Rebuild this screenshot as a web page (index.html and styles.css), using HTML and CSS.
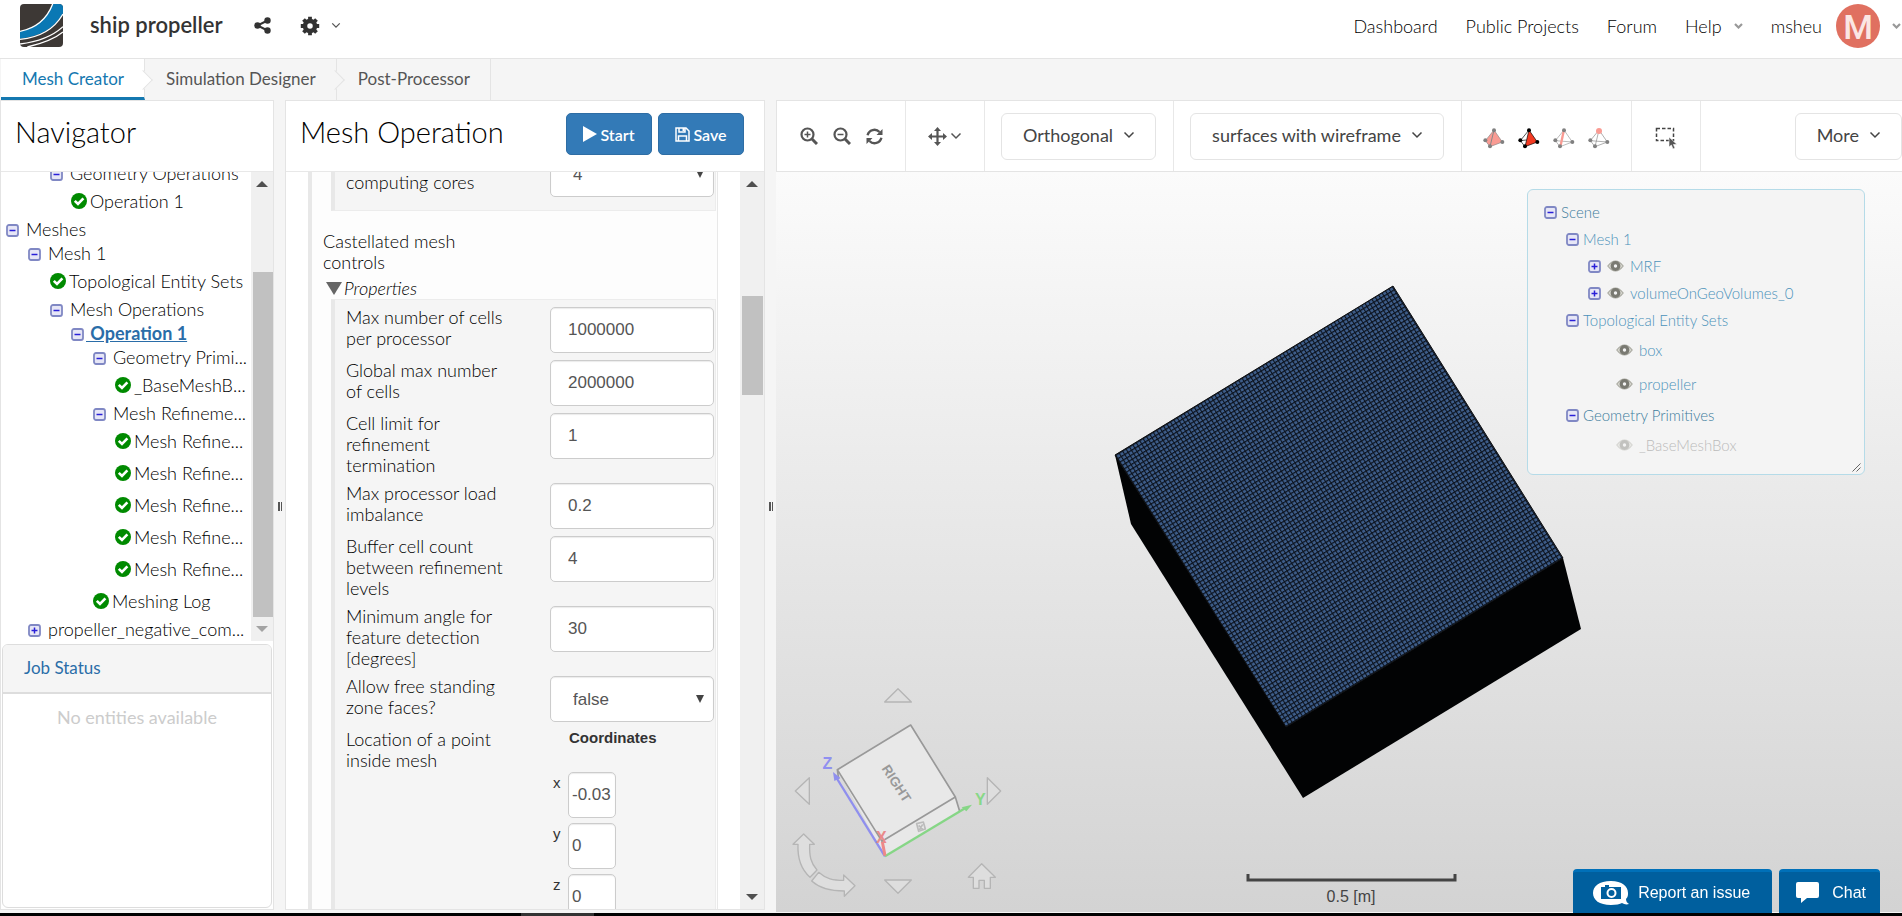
FILE: index.html
```html
<!DOCTYPE html>
<html lang="en">
<head>
  <meta charset="UTF-8" />
  <title>ship propeller</title>
  <link rel="stylesheet" href="styles.css">
</head>
<body>
  <!-- shared icons -->
  <svg class="defs" width="0" height="0" aria-hidden="true">
    <symbol id="ok" viewBox="0 0 16 16">
      <circle cx="8" cy="8" r="8" fill="#008a00" />
      <path d="M3.8 7.8l3.2 3.2 5.4-5.6" fill="none" stroke="#fff" stroke-width="2.6" />
    </symbol>
    <symbol id="minus" viewBox="0 0 13 13">
      <rect x="1" y="1" width="11" height="11" rx="2" fill="#e6e6f6" stroke="#8088c4" stroke-width="1.800" />
      <path d="M3.5 6.5h6" stroke="#2a20d8" stroke-width="1.5" />
    </symbol>
    <symbol id="plus" viewBox="0 0 13 13">
      <rect x="1" y="1" width="11" height="11" rx="2" fill="#e6e6f6" stroke="#8088c4" stroke-width="1.800" />
      <path d="M3.5 6.5h6M6.5 3.5v6" stroke="#2a20d8" stroke-width="1.5" />
    </symbol>
    <symbol id="eye" viewBox="0 0 17 12">
      <path d="M.8 6Q8.500-4 16.200 6Q8.500 16 .8 6z" fill="#d8d8d0" stroke="#a9a9a0" stroke-width="1.200" />
      <circle cx="8.500" cy="6" r="3.300" fill="#f4f4f4" stroke="#7a7a72" stroke-width="3.200" />
    </symbol>
    <symbol id="chevron" viewBox="0 0 12 8">
      <path d="M1.500 1.500l4.500 4.500 4.500-4.500" fill="none" stroke="currentColor" stroke-width="1.500" />
    </symbol>
    <symbol id="caret" viewBox="0 0 9 6">
      <path d="M1 1l3.500 3.500L8 1" fill="none" stroke="currentColor" stroke-width="2.200" />
    </symbol>
  </svg>

  <header class="topbar">
    <a href="#" class="logo" aria-label="Home">
      <svg width="43" height="43" viewBox="0 0 129 129">
        <clipPath id="logo-clip"><rect width="129" height="129" rx="12" /></clipPath>
        <g clip-path="url(#logo-clip)">
          <rect width="129" height="129" fill="#3d3835" />
          <path d="M0 82C50 72 82 42 98 0H129V28C104 72 62 98 0 104z" fill="#0a78b4" />
          <path d="M0 82C50 72 82 42 98 0M0 106C62 100 104 74 129 30M0 120C50 114 96 98 129 68M22 129C60 120 100 108 129 84" fill="none" stroke="#fff" stroke-width="4" />
        </g>
      </svg>
    </a>
    <h1>ship propeller</h1>
    <button class="icon-btn share" aria-label="Share">
      <svg width="17" height="17" viewBox="0 0 17 17" fill="#333">
        <circle cx="13.500" cy="3.500" r="3.200" /><circle cx="3.500" cy="8.500" r="3.200" /><circle cx="13.500" cy="13.500" r="3.200" />
        <path d="M13.500 3.500l-10 5 10 5" fill="none" stroke="#333" stroke-width="2" />
      </svg>
    </button>
    <button class="icon-btn gear" aria-label="Settings">
      <svg width="20" height="20" viewBox="0 0 20 20">
        <circle cx="10" cy="10" r="5" fill="none" stroke="#333" stroke-width="4.500" />
        <g stroke="#333" stroke-width="3.800"><path d="M10 .8v3M10 16.200v3M.8 10h3M16.200 10h3M3.500 3.500l2.100 2.100M14.400 14.400l2.100 2.100M3.500 16.500l2.100-2.100M14.400 5.600l2.100-2.100" /></g>
      </svg>
      <svg class="chev" width="10" height="7"><use href="#chevron" /></svg>
    </button>
    <nav class="topnav">
      <a href="#">Dashboard</a>
      <a href="#">Public Projects</a>
      <a href="#">Forum</a>
      <a href="#">Help <svg class="caret" width="9" height="6"><use href="#caret" /></svg></a>
      <a href="#" class="user">msheu <span class="avatar">M</span> <svg class="caret" width="9" height="6"><use href="#caret" /></svg></a>
    </nav>
  </header>

  <nav class="steps">
    <a href="#" class="active">Mesh Creator</a>
    <a href="#">Simulation Designer</a>
    <a href="#">Post-Processor</a>
  </nav>

  <main>
    <section class="panel navigator">
      <div class="panel-head"><h2>Navigator</h2></div>
      <div class="scroll-area">
        <ul class="tree">
          <li class="l2"><svg class="tg"><use href="#minus" /></svg>Geometry Operations</li>
          <li class="l3 leaf"><svg class="ok"><use href="#ok" /></svg>Operation 1</li>
          <li><svg class="tg"><use href="#minus" /></svg>Meshes</li>
          <li class="l1"><svg class="tg"><use href="#minus" /></svg>Mesh 1</li>
          <li class="l2 leaf"><svg class="ok"><use href="#ok" /></svg>Topological Entity Sets</li>
          <li class="l2"><svg class="tg"><use href="#minus" /></svg>Mesh Operations</li>
          <li class="l3"><svg class="tg"><use href="#minus" /></svg><a href="#">&nbsp;Operation 1</a></li>
          <li class="l4"><svg class="tg"><use href="#minus" /></svg>Geometry Primi...</li>
          <li class="l5 leaf"><svg class="ok"><use href="#ok" /></svg>_BaseMeshB...</li>
          <li class="l4"><svg class="tg"><use href="#minus" /></svg>Mesh Refineme...</li>
          <li class="l5 leaf"><svg class="ok"><use href="#ok" /></svg>Mesh Refine...</li>
          <li class="l5 leaf"><svg class="ok"><use href="#ok" /></svg>Mesh Refine...</li>
          <li class="l5 leaf"><svg class="ok"><use href="#ok" /></svg>Mesh Refine...</li>
          <li class="l5 leaf"><svg class="ok"><use href="#ok" /></svg>Mesh Refine...</li>
          <li class="l5 leaf"><svg class="ok"><use href="#ok" /></svg>Mesh Refine...</li>
          <li class="l4 leaf"><svg class="ok"><use href="#ok" /></svg>Meshing Log</li>
          <li class="l1"><svg class="tg"><use href="#plus" /></svg>propeller_negative_com...</li>
        </ul>
        <div class="scrollbar">
          <i class="up"></i><b class="thumb"></b><i class="down off"></i>
        </div>
      </div>
      <div class="jobs">
        <h3><a href="#">Job Status</a></h3>
        <p>No entities available</p>
      </div>
    </section>

    <div class="splitter"><i></i></div>

    <section class="panel operation">
      <div class="panel-head">
        <h2>Mesh Operation</h2>
        <button class="btn"><svg width="14" height="16" viewBox="0 0 14 16"><path d="M0 0l14 8-14 8z" fill="#fff" /></svg>Start</button>
        <button class="btn"><svg width="15" height="15" viewBox="0 0 15 15" fill="none" stroke="#fff" stroke-width="1.500"><path d="M1 1h10l3 3v10H1z" /><path d="M4 1v4h6V1M3.500 14V9h8v5" /><path d="M8.500 1v3" stroke-width="2" /></svg>Save</button>
      </div>
      <div class="scroll-area">
        <div class="form-wrap">
          <div class="outer">
            <div class="group first">
              <div class="row">
                <label for="cores">Number of computing cores</label>
                <span class="select"><select id="cores"><option>4</option></select></span>
              </div>
            </div>
            <p class="group-title">Castellated mesh controls</p>
            <p class="props"><i></i>Properties</p>
            <div class="group">
              <div class="row"><label for="f1">Max number of cells per processor</label><input id="f1" value="1000000"></div>
              <div class="row"><label for="f2">Global max number of cells</label><input id="f2" value="2000000"></div>
              <div class="row"><label for="f3">Cell limit for refinement termination</label><input id="f3" value="1"></div>
              <div class="row"><label for="f4">Max processor load imbalance</label><input id="f4" value="0.2"></div>
              <div class="row"><label for="f5">Buffer cell count between refinement levels</label><input id="f5" value="4"></div>
              <div class="row"><label for="f6">Minimum angle for feature detection [degrees]</label><input id="f6" value="30"></div>
              <div class="row"><label for="f7">Allow free standing zone faces?</label><span class="select"><select id="f7"><option>false</option></select></span></div>
              <div class="row">
                <span class="label">Location of a point inside mesh</span>
                <div class="coords">
                  <strong>Coordinates</strong>
                  <div><label for="cx">x</label><input id="cx" value="-0.03"></div>
                  <div><label for="cy">y</label><input id="cy" value="0"></div>
                  <div><label for="cz">z</label><input id="cz" value="0"></div>
                </div>
              </div>
            </div>
          </div>
        </div>
        <div class="scrollbar">
          <i class="up"></i><b class="thumb"></b><i class="down"></i>
        </div>
      </div>
    </section>

    <div class="splitter"><i></i></div>

    <section class="viewer">
      <div class="toolbar">
        <div class="tools zoom">
          <button class="icon-btn" aria-label="Zoom in"><svg width="18" height="18" viewBox="0 0 18 18" fill="none" stroke="#555"><circle cx="7.500" cy="7.500" r="6" stroke-width="2.200" /><path d="M12 12l5 5" stroke-width="3" /><path d="M4.500 7.500h6M7.500 4.500v6" stroke-width="1.500" /></svg></button>
          <button class="icon-btn" aria-label="Zoom out"><svg width="18" height="18" viewBox="0 0 18 18" fill="none" stroke="#555"><circle cx="7.500" cy="7.500" r="6" stroke-width="2.200" /><path d="M12 12l5 5" stroke-width="3" /><path d="M4.500 7.500h6" stroke-width="1.500" /></svg></button>
          <button class="icon-btn" aria-label="Refresh"><svg width="17" height="17" viewBox="0 0 17 17" fill="none" stroke="#555" stroke-width="2.400"><path d="M1.600 7.200A7 7 0 0 1 13.500 4M15.400 9.800A7 7 0 0 1 3.500 13" /><path d="M16.500 1v6h-6zM.5 16v-6h6z" fill="#555" stroke="none" /></svg></button>
        </div>
        <div class="tools move">
          <button class="icon-btn" aria-label="Move"><svg width="19" height="19" viewBox="0 0 19 19"><path d="M9.500 2v15M2 9.500h15" stroke="#555" stroke-width="2.200" /><path d="M9.500 0l3.500 4h-7zM9.500 19l3.500-4h-7zM0 9.500l4-3.500v7zM19 9.500l-4-3.500v7z" fill="#555" /></svg><svg class="chev" width="12" height="8"><use href="#chevron" /></svg></button>
        </div>
        <div class="tools"><button class="drop">Orthogonal <svg width="12" height="8"><use href="#chevron" /></svg></button></div>
        <div class="tools"><button class="drop">surfaces with wireframe <svg width="12" height="8"><use href="#chevron" /></svg></button></div>
        <div class="tools tetra">
          <button class="icon-btn" aria-label="Volumes"><svg width="22" height="21" viewBox="0 0 66 63"><path d="M33 6L7 38 21 56 58 42z" fill="#fa9b93" stroke="#888" stroke-width="2" /><path d="M33 6L21 56" stroke="#888" stroke-width="3" /><g fill="#808080"><circle cx="33" cy="7" r="6" /><circle cx="7" cy="37" r="6" /><circle cx="21" cy="55" r="6" /><circle cx="58" cy="42" r="6" /></g></svg></button>
          <button class="icon-btn" aria-label="Faces"><svg width="22" height="21" viewBox="0 0 66 63"><path d="M33 6L7 38 21 56" fill="none" stroke="#000" stroke-width="2" /><path d="M33 6L21 56 58 42z" fill="#f33a22" stroke="#000" stroke-width="2" /><path d="M7 38l18-2" stroke="#000" stroke-width="2" /><g><circle cx="33" cy="7" r="6" /><circle cx="7" cy="37" r="6" /><circle cx="21" cy="55" r="6" /><circle cx="58" cy="42" r="6" /></g></svg></button>
          <button class="icon-btn" aria-label="Edges"><svg width="22" height="21" viewBox="0 0 66 63"><path d="M33 6L7 38 21 56 58 42zM7 38l51 4" fill="none" stroke="#999" stroke-width="2" /><path d="M32 10L23 52" stroke="#fa9b93" stroke-width="7" /><g fill="#808080"><circle cx="33" cy="7" r="6" /><circle cx="7" cy="37" r="6" /><circle cx="21" cy="55" r="6" /><circle cx="58" cy="42" r="6" /></g></svg></button>
          <button class="icon-btn" aria-label="Vertices"><svg width="22" height="21" viewBox="0 0 66 63"><path d="M33 6L7 38 21 56 58 42zM7 38l51 4M33 6L21 56" fill="none" stroke="#888" stroke-width="2" /><circle cx="33" cy="9" r="9" fill="#fa9b93" /><g fill="#808080"><circle cx="7" cy="37" r="6" /><circle cx="21" cy="55" r="6" /><circle cx="58" cy="42" r="6" /></g></svg></button>
        </div>
        <div class="tools pick">
          <button class="icon-btn" aria-label="Box select"><svg width="22" height="22" viewBox="0 0 22 22"><path d="M1.500 1.500h17v12h-17z" fill="none" stroke="#444" stroke-width="1.500" stroke-dasharray="3.500 2" /><path d="M14 10v10l2.400-2 1.600 4 2-1-1.600-3.500H22z" fill="#555" stroke="#fff" stroke-width=".6" /></svg></button>
        </div>
        <button class="drop more">More <svg width="12" height="8"><use href="#chevron" /></svg></button>
      </div>

      <div class="canvas">
        <svg class="model" viewBox="776 172 1126 740">
          <defs>
            <pattern id="mesh" width="4" height="4" patternUnits="userSpaceOnUse" patternTransform="matrix(.853 -.521 .53 .848 1115 455)">
              <rect width="4" height="4" fill="#46699a" />
              <path d="M0 0h4M0 0v4" stroke="#070b12" stroke-width="2.200" />
            </pattern>
          </defs>
          <path d="M1115 455l16 69 172 274 278-169-18-71z" fill="#020304" />
          <path d="M1393 286L1115 455l171 272 277-169z" fill="#1f314d" />
          <path d="M1393 286L1115 455l171 272 277-169z" fill="url(#mesh)" fill-opacity=".8" stroke="#111" />
          <path d="M1248 874v6h207v-6" fill="none" stroke="#444" stroke-width="3" />
          <text x="1351" y="902" text-anchor="middle" class="scale">0.5 [m]</text>
        </svg>

        <svg class="navcube" viewBox="0 0 780 768" stroke-linejoin="round">
          <g fill="#dedede" stroke="#b5b5b5" stroke-width="4">
            <path d="M384 86l40 40h-80zM384 700l40-40h-80zM76 393l42-40v80zM692 393l-40-40v80z" />
            <path d="M635 611l41 41h-15v33h-18v-24h-16v24h-17v-33h-15z" />
            <path d="M101 522l32 31h-14c-1 36 3 56 22 77l-21 22c-27-24-38-54-36-99H69z" />
            <path d="M146 637c22 20 44 24 75 24v-16l34 32-32 32v-16c-44 0-74-8-98-30z" />
          </g>
          <path d="M422 195L202 329l143 260 224-135-13-43z" fill="#e8e8e8" />
          <path d="M422 195L202 329l134 215 220-133zM556 411l13 43M202 329l4 28" fill="none" stroke="#999" stroke-width="5" />
          <text x="378" y="371" class="face" transform="rotate(57 378 371)" dy="12">RIGHT</text>
          <path d="M440 491l20-5 6 21-20 7zM446 496l12 12M458 493l-10 17" fill="none" stroke="#bbb" stroke-width="5" />
          <path d="M345 589L196 348" stroke="#8f8fee" stroke-width="7" /><path d="M189 336l22 18-18 9z" fill="#8f8fee" />
          <path d="M345 589l240-144" stroke="#86d686" stroke-width="7" /><path d="M606 434l-17 20-14-12z" fill="#86d686" />
          <path d="M345 587l-8-42" stroke="#e88" stroke-width="9" />
          <text x="172" y="327" class="axis" fill="#9090f0">Z</text>
          <text x="631" y="435" class="axis" fill="#88d888">Y</text>
          <text x="334" y="549" class="axis" fill="#e98a8a">X</text>
        </svg>

        <div class="scene">
          <ul>
            <li class="dark"><svg class="tg"><use href="#minus" /></svg>Scene</li>
            <li class="s1"><svg class="tg"><use href="#minus" /></svg>Mesh 1</li>
            <li class="s2"><svg class="tg"><use href="#plus" /></svg><svg class="eye"><use href="#eye" /></svg>MRF</li>
            <li class="s2"><svg class="tg"><use href="#plus" /></svg><svg class="eye"><use href="#eye" /></svg>volumeOnGeoVolumes_0</li>
            <li class="s1"><svg class="tg"><use href="#minus" /></svg>Topological Entity Sets</li>
            <li class="s3"><svg class="eye"><use href="#eye" /></svg>box</li>
            <li class="s3"><svg class="eye"><use href="#eye" /></svg>propeller</li>
            <li class="s1 dark"><svg class="tg"><use href="#minus" /></svg>Geometry Primitives</li>
            <li class="s3 hidden"><svg class="eye"><use href="#eye" /></svg>_BaseMeshBox</li>
          </ul>
          <svg class="grip" width="9" height="9" viewBox="0 0 9 9"><path d="M.5 8.500l8-8M4.500 8.500l4-4" stroke="#666" /></svg>
        </div>
      </div>
    </section>
  </main>

  <div class="support">
    <button><svg width="36" height="24" viewBox="0 0 36 24"><path d="M18 0C6 0 0 5 0 12s6 12 18 12c5 0 9-1 11-2 2 1 4 2 7 1-2-1-3-3-3-5 2-2 2-4 2-6C35 5 29 0 18 0z" fill="#fff" /><path d="M8 6h4V4h4v2h12v12H8z" fill="#005f9e" /><circle cx="18.500" cy="12" r="4" fill="none" stroke="#fff" stroke-width="2" /></svg>Report an issue</button>
    <button class="chat"><svg width="23" height="21" viewBox="0 0 23 21"><path d="M2 0h19q2 0 2 2v12q0 2-2 2H11l-6 5v-5H2q-2 0-2-2V2q0-2 2-2z" fill="#fff" /></svg>Chat</button>
  </div>
  <footer class="strip"><i></i></footer>
</body>
</html>
```
FILE: styles.css
```css
* {
  box-sizing: border-box;
}

body {
  margin: 0;
  height: 100vh;
  display: flex;
  flex-direction: column;
  overflow: hidden;
  background: #f5f5f5;
  color: #000;
  font-family: Lato, sans-serif;
  font-size: 18px;
  font-weight: 300;
}

.defs {
  position: absolute;
}

h1, h2, h3, p, ul {
  margin: 0;
  padding: 0;
  font-weight: 300;
}

ul {
  list-style: none;
}

a {
  color: inherit;
  text-decoration: none;
}

button {
  font-family: inherit;
  font-weight: inherit;
  cursor: pointer;
}

.icon-btn {
  display: flex;
  align-items: center;
  padding: 0;
  border: none;
  background: none;
  color: #555;
}

/* top bar */
.topbar {
  display: flex;
  align-items: center;
  flex: none;
  height: 59px;
  padding: 0 1px 7px 20px;
  background: #fff;
  border-bottom: 1px solid #e4e4e4;
}

.logo {
  display: flex;
  margin-right: 27px;
}

.topbar h1 {
  margin-bottom: 2px;
  font-size: 22px;
  font-weight: 600;
  color: #333;
}

.share {
  margin-left: 31px;
}

.gear {
  margin-left: 29px;
  gap: 11px;
}

.topnav {
  display: flex;
  align-items: center;
  gap: 28px;
  margin-left: auto;
}

.topnav a {
  display: flex;
  align-items: center;
}

.caret {
  margin-left: 12px;
  color: #999;
}

.avatar {
  width: 44px;
  height: 44px;
  margin-left: 14px;
  border-radius: 50%;
  background: #e07060;
  color: #fbe6e3;
  font: 500 34px/46px Roboto, sans-serif;
  text-align: center;
}

/* workflow steps */
.steps {
  display: flex;
  flex: none;
  height: 41px;
  padding-left: 1px;
  font-size: 17px;
  font-weight: 400;
}

.steps a {
  position: relative;
  padding: 0 20px 0 21px;
  border-right: 1px solid #e4e4e4;
  line-height: 39px;
  color: #555;
}

.steps a.active {
  background: #fff;
  border-bottom: 3px solid #1478b0;
  color: #1478b0;
}

.steps a:not(:last-child)::after {
  content: "";
  position: absolute;
  right: -6px;
  top: 14px;
  width: 13px;
  height: 13px;
  border: solid #e4e4e4;
  border-width: 1px 1px 0 0;
  background: #f5f5f5;
  transform: rotate(45deg);
}

.steps a.active::after {
  background: #fff;
}

main {
  display: flex;
  flex: 1;
  min-height: 0;
}

.panel {
  display: flex;
  flex-direction: column;
  flex: none;
  margin-bottom: 3px;
  background: #fff;
  border: 1px solid #e4e4e4;
}

.navigator {
  width: 274px;
}

.operation {
  width: 480px;
}

.panel-head {
  display: flex;
  align-items: center;
  flex: none;
  height: 71px;
  padding: 0 20px 9px 14px;
  border-bottom: 1px solid #e8e8e8;
}

.panel-head h2 {
  flex: 1;
  font-size: 29px;
}

.scroll-area {
  display: flex;
  flex: 1;
  min-height: 0;
}

.splitter {
  display: flex;
  align-items: center;
  justify-content: center;
  width: 11px;
  flex: none;
}

.splitter i {
  width: 4px;
  height: 9px;
  border: solid #555;
  border-width: 0 1px 0 2px;
}

.scrollbar {
  display: flex;
  flex-direction: column;
  align-items: center;
  flex: none;
  width: 22px;
  padding: 9px 0;
  background: #f0f0f0;
}

.operation .scrollbar {
  width: 24px;
}

.scrollbar i {
  border: 6px solid transparent;
}

.scrollbar .up {
  border-top: none;
  border-bottom-color: #505050;
}

.scrollbar .down {
  margin-top: auto;
  border-bottom: none;
  border-top-color: #505050;
}

.scrollbar .down.off {
  border-top-color: #a3a3a3;
}

.thumb {
  align-self: flex-end;
  width: 20px;
  background: #c1c1c1;
}

.navigator .thumb {
  height: 345px;
  margin-top: 85px;
}

.operation .thumb {
  width: 21px;
  height: 99px;
  margin: 109px 1px 0 0;
}

/* project tree */
.navigator .scroll-area {
  flex: 0 1 469px;
  overflow: hidden;
}

.tree {
  flex: 1;
  min-width: 0;
  margin-top: -11px;
  white-space: nowrap;
}

.tree li {
  display: flex;
  align-items: center;
  height: 24px;
  padding-left: 5px;
}

.tree .leaf {
  height: 32px;
}

.tree .l1 { padding-left: 27px; }
.tree .l2 { padding-left: 49px; }
.tree .l3 { padding-left: 70px; }
.tree .l4 { padding-left: 92px; }
.tree .l5 { padding-left: 114px; }

.tg {
  flex: none;
  width: 13px;
  height: 13px;
  margin: 2px 7px 0 0;
}

.ok {
  flex: none;
  width: 16px;
  height: 16px;
  margin-right: 3px;
}

.tree a {
  margin-left: -5px;
  color: #2a6da8;
  font-weight: 700;
  text-decoration: underline;
}

.jobs {
  flex: 1;
  margin: 3px 1px 1px;
  border: 1px solid #ddd;
  border-radius: 6px;
  overflow: hidden;
}

.jobs h3 {
  padding: 0 0 2px 21px;
  border-bottom: 2px solid #ddd;
  background: #f5f5f5;
  font-size: 17px;
  font-weight: 400;
  line-height: 45px;
  color: #2a6da8;
}

.jobs p {
  padding-top: 12px;
  color: #ccc;
  font-weight: 400;
  text-align: center;
}

/* operation form */
.operation .panel-head {
  gap: 6px;
}

.btn {
  display: flex;
  align-items: center;
  justify-content: center;
  gap: 3px;
  width: 86px;
  height: 42px;
  margin-top: 5px;
  border: 1px solid #2e6da4;
  border-radius: 5px;
  background: #337ab7;
  color: #fff;
  font-size: 16px;
  font-weight: 600;
}

.operation .scroll-area {
  overflow: hidden;
}

.form-wrap {
  flex: 1;
  padding: 0 22px;
  overflow: hidden;
}

.outer {
  display: flow-root;
  height: 100%;
  padding: 0 1px 0 19px;
  border: solid #e8e8e8;
  border-width: 0 1px 0 4px;
  background: #fdfdfd;
}

.group {
  padding: 7px 1px 0 11px;
  border: 1px solid #ececec;
  border-left: 4px solid #e8e8e8;
  background: #f5f5f5;
}

.group.first {
  margin-top: -29px;
  padding-bottom: 6px;
}

.row {
  display: flex;
  align-items: flex-start;
  justify-content: space-between;
  padding-bottom: 7px;
}

.row > label, .label {
  width: 165px;
  line-height: 21px;
}

.group-title {
  width: 180px;
  margin: 20px 0 0 -8px;
  line-height: 21px;
}

.props {
  display: flex;
  align-items: center;
  gap: 2px;
  padding: 5px 0 1px;
  margin-left: -5px;
  font-style: italic;
  line-height: 20px;
}

.props i {
  border: solid transparent;
  border-width: 13px 8px 0;
  border-top-color: #666;
}

input, select {
  width: 164px;
  height: 46px;
  padding: 0 17px;
  border: 1px solid #ccc;
  border-radius: 5px;
  background: #fff;
  box-shadow: inset 0 1px 1px rgba(0,0,0,0.08);
  color: #555;
  font: 17px "Liberation Sans", sans-serif;
}

select {
  appearance: none;
  padding-left: 22px;
}

.select {
  position: relative;
}

.select select {
  display: block;
}

.select::after {
  content: "";
  position: absolute;
  right: 10px;
  top: 19px;
  border: solid transparent;
  border-width: 8px 4px 0;
  border-top-color: #444;
}

.coords {
  width: 163px;
  color: #333;
  font-family: "Liberation Sans", sans-serif;
  font-size: 15px;
  font-weight: 400;
}

.coords strong {
  display: block;
  height: 43px;
  margin-left: 18px;
}

.coords div {
  display: flex;
  gap: 7px;
  margin-bottom: 5px;
}

.coords label {
  width: 10px;
  padding: 2px 0 0 2px;
}

.coords input {
  width: 48px;
  padding: 0 3px;
}

/* viewer */
.viewer {
  display: flex;
  flex-direction: column;
  flex: 1;
  min-width: 0;
  margin-bottom: 1px;
}

.toolbar {
  display: flex;
  flex: none;
  height: 72px;
  background: #fff;
  border: 1px solid #e4e4e4;
  border-right: none;
}

.tools {
  display: flex;
  align-items: center;
  padding: 0 17px 0 16px;
  border-right: 1px solid #e8e8e8;
}

.zoom {
  gap: 15px;
  padding: 0 22px 0 23px;
}

.move {
  padding: 0 22px;
}

.move .chev {
  margin-left: 3px;
}

.tetra {
  gap: 13px;
  padding: 4px 21px 0;
}

.pick {
  padding: 4px 23px 0;
}

.drop {
  display: flex;
  align-items: center;
  gap: 10px;
  height: 47px;
  padding: 0 20px 2px 21px;
  border: 1px solid #e4e4e4;
  border-radius: 6px;
  background: #fff;
  color: #444;
  font-size: 18px;
  font-weight: 400;
}

.more {
  align-self: center;
  margin-left: auto;
}

.canvas {
  position: relative;
  flex: 1;
  min-height: 0;
  background: linear-gradient(#fbfbfb, #d3d3d3);
}

.model {
  display: block;
  width: 100%;
  height: 100%;
}

.scale {
  fill: #444;
  font: 16px "Liberation Sans", sans-serif;
}

.navcube {
  position: absolute;
  left: -6px;
  bottom: -4px;
  width: 260px;
  height: 256px;
}

.face {
  fill: #999;
  font: bold 40px "Liberation Sans", sans-serif;
  text-anchor: middle;
}

.axis {
  font: bold 48px "Liberation Sans", sans-serif;
  text-anchor: middle;
}

.scene {
  position: absolute;
  top: 17px;
  right: 37px;
  width: 338px;
  height: 286px;
  padding: 8px 16px;
  border: 1px solid #b5dbe8;
  border-radius: 6px;
  background: #f4f4f4;
  color: #4b92ba;
  font-size: 15px;
  font-weight: 400;
}

.scene li {
  display: flex;
  align-items: center;
  height: 27px;
}

.scene .tg {
  margin-right: 4px;
}

.scene .dark { color: #3d7c9c; }
.scene .s1 { padding-left: 22px; }
.scene .s2 { padding-left: 44px; }

.scene .s3 {
  height: 34px;
  padding-left: 72px;
}

.scene .hidden {
  color: #bbb;
}

.hidden .eye {
  opacity: 0.4;
}

.eye {
  width: 17px;
  height: 12px;
  margin-right: 6px;
}

.s2 .eye {
  margin-left: 2px;
}

.grip {
  position: absolute;
  right: 3px;
  bottom: 2px;
}

.support {
  position: fixed;
  right: 22px;
  bottom: 3px;
  display: flex;
  gap: 7px;
}

.support button {
  display: flex;
  align-items: center;
  gap: 9px;
  height: 44px;
  padding: 0 22px 0 20px;
  border: none;
  border-top: 3px solid #0070b8;
  border-radius: 4px 4px 0 0;
  background: #005f9e;
  color: #fff;
  font: 16px "Liberation Sans", sans-serif;
}

.support .chat {
  gap: 13px;
  padding: 0 14px 0 17px;
}

.strip {
  display: flex;
  flex: none;
  height: 3px;
  background: #000;
}

.strip i {
  width: 73px;
  margin-left: 521px;
  background: #333;
}
```
